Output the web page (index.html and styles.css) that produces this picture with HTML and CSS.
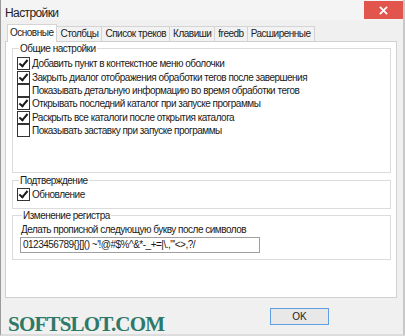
FILE: index.html
```html
<html>
  <head>
    <meta name="viewport" content="width=device-width, initial-scale=1.0">
    <title>Настройки</title>
    <link rel="stylesheet" href="styles.css">
  </head>
  <body>
    <div class="window">
      <div class="titlebar">
        <div class="title">Настройки</div>
        <div class="close">
          <svg viewBox="0 0 10 10" width="9" height="9">
            <path d="M1 1L9 9M9 1L1 9" stroke="white" stroke-width="2"/>
          </svg>
        </div>
      </div>

      <div class="tabs">
        <div class="tab active">Основные</div>
        <div class="tab">Столбцы</div>
        <div class="tab">Список треков</div>
        <div class="tab">Клавиши</div>
        <div class="tab">freedb</div>
        <div class="tab">Расширенные</div>
      </div>

      <div class="panel">
        <fieldset class="group general">
          <legend>Общие настройки</legend>
          <div class="row"><span class="box on"></span>Добавить пункт в контекстное меню оболочки</div>
          <div class="row"><span class="box on"></span>Закрыть диалог отображения обработки тегов после завершения</div>
          <div class="row"><span class="box"></span>Показывать детальную информацию во время обработки тегов</div>
          <div class="row"><span class="box on"></span>Открывать последний каталог при запуске программы</div>
          <div class="row"><span class="box on"></span>Раскрыть все каталоги после открытия каталога</div>
          <div class="row"><span class="box"></span>Показывать заставку при запуске программы</div>
        </fieldset>

        <fieldset class="group confirm">
          <legend>Подтверждение</legend>
          <div class="row"><span class="box on"></span>Обновление</div>
        </fieldset>

        <fieldset class="group case">
          <legend>Изменение регистра</legend>
          <div class="label">Делать прописной следующую букву после символов</div>
          <div class="field">0123456789{}[]() ~'!@#$%^&amp;*-_+=|\.,"'&lt;&gt;,?/</div>
        </fieldset>
      </div>

      <div class="footer">
        <div class="brand">SOFTSLOT.COM</div>
        <div class="button">OK</div>
      </div>
    </div>
  </body>
</html>
```

FILE: styles.css
```css
html, body {
  margin: 0;
  padding: 0;
}
body {
  width: 405px;
  height: 336px;
  font-family: "Liberation Sans", Arial, sans-serif;
  font-size: 10px;
  letter-spacing: -0.5px;
  color: #1a1a1a;
  background: #f0f0f0;
  overflow: hidden;
}
.window {
  width: 405px;
  height: 336px;
  box-sizing: border-box;
  border-left: 1px solid #9a9a9a;
  border-right: 2px solid #c8c8c8;
  border-bottom: 2px solid #dcdcdc;
  display: flex;
  flex-direction: column;
}
.titlebar {
  height: 20px;
  display: flex;
  justify-content: space-between;
  align-items: flex-start;
  background: #f4f4f4;
}
.title {
  padding: 6px 0 0 4px;
  font-size: 12px;
  letter-spacing: -0.6px;
  color: #222;
}
.close {
  width: 39px;
  height: 18px;
  margin: 1px 0 0 0;
  background: #e2554d;
  display: flex;
  align-items: center;
  justify-content: center;
}

.tabs {
  display: flex;
  align-items: flex-end;
  height: 17px;
  margin: 4px 0 0 6px;
  position: relative;
  z-index: 1;
}
.tab {
  height: 14px;
  line-height: 14px;
  padding: 0 3px;
  border: 1px solid #d4d4d4;
  border-bottom: none;
  margin-left: -1px;
  background: #f2f2f2;
  color: #222;
}
.tab.active {
  height: 17px;
  line-height: 16px;
  margin-left: 0;
  margin-bottom: -1px;
  background: #fff;
  padding: 0 3px 0 2px;
}

.panel {
  height: 257px;
  box-sizing: border-box;
  margin: 0 6px 0 4px;
  padding: 0 5px 0 6px;
  background: #fff;
  border: 1px solid #d0d0d0;
}
.group {
  margin: 0;
  padding: 0 4px;
  border: 1px solid #dcdcdc;
}
.group legend {
  padding: 0 1px;
  margin-left: 2px;
  line-height: 13px;
}
.general {
  padding-top: 2px;
  padding-bottom: 35px;
}
.confirm {
  margin-top: 1px;
  padding-bottom: 7px;
}
.case {
  padding: 1px 8px 6px 7px;
}
.row {
  display: flex;
  align-items: center;
  height: 13.4px;
  white-space: nowrap;
}
.box {
  width: 11px;
  height: 11px;
  border: 1px solid #333;
  background: #fff;
  margin-right: 2px;
  flex: none;
  position: relative;
}
.box.on::after {
  content: '';
  position: absolute;
  left: 3px;
  top: 0px;
  width: 3px;
  height: 7px;
  border: solid #1a1a1a;
  border-width: 0 2px 2px 0;
  transform: rotate(40deg);
}
.label {
  line-height: 13px;
  margin-left: 1px;
}
.field {
  width: 240px;
  height: 16px;
  box-sizing: border-box;
  margin-top: 1.5px;
  border: 1px solid #a0a0a0;
  padding: 0 2px;
  line-height: 14px;
  white-space: nowrap;
  overflow: hidden;
}

.footer {
  flex: 1;
  display: flex;
  align-items: flex-start;
  padding: 0 0 0 7px;
}
.brand {
  margin-top: 16px;
  font-family: "Liberation Serif", "DejaVu Serif", serif;
  font-weight: bold;
  font-size: 21px;
  letter-spacing: -0.8px;
  line-height: 20px;
  color: #2e7867;
}
.button {
  margin: 10px 0 0 auto;
  margin-right: 74px;
  width: 59px;
  height: 17px;
  box-sizing: border-box;
  border: 1px solid #5d9fdf;
  background: #e8e8e8;
  text-align: center;
  line-height: 15px;
  letter-spacing: 0;
  color: #222;
}
```
